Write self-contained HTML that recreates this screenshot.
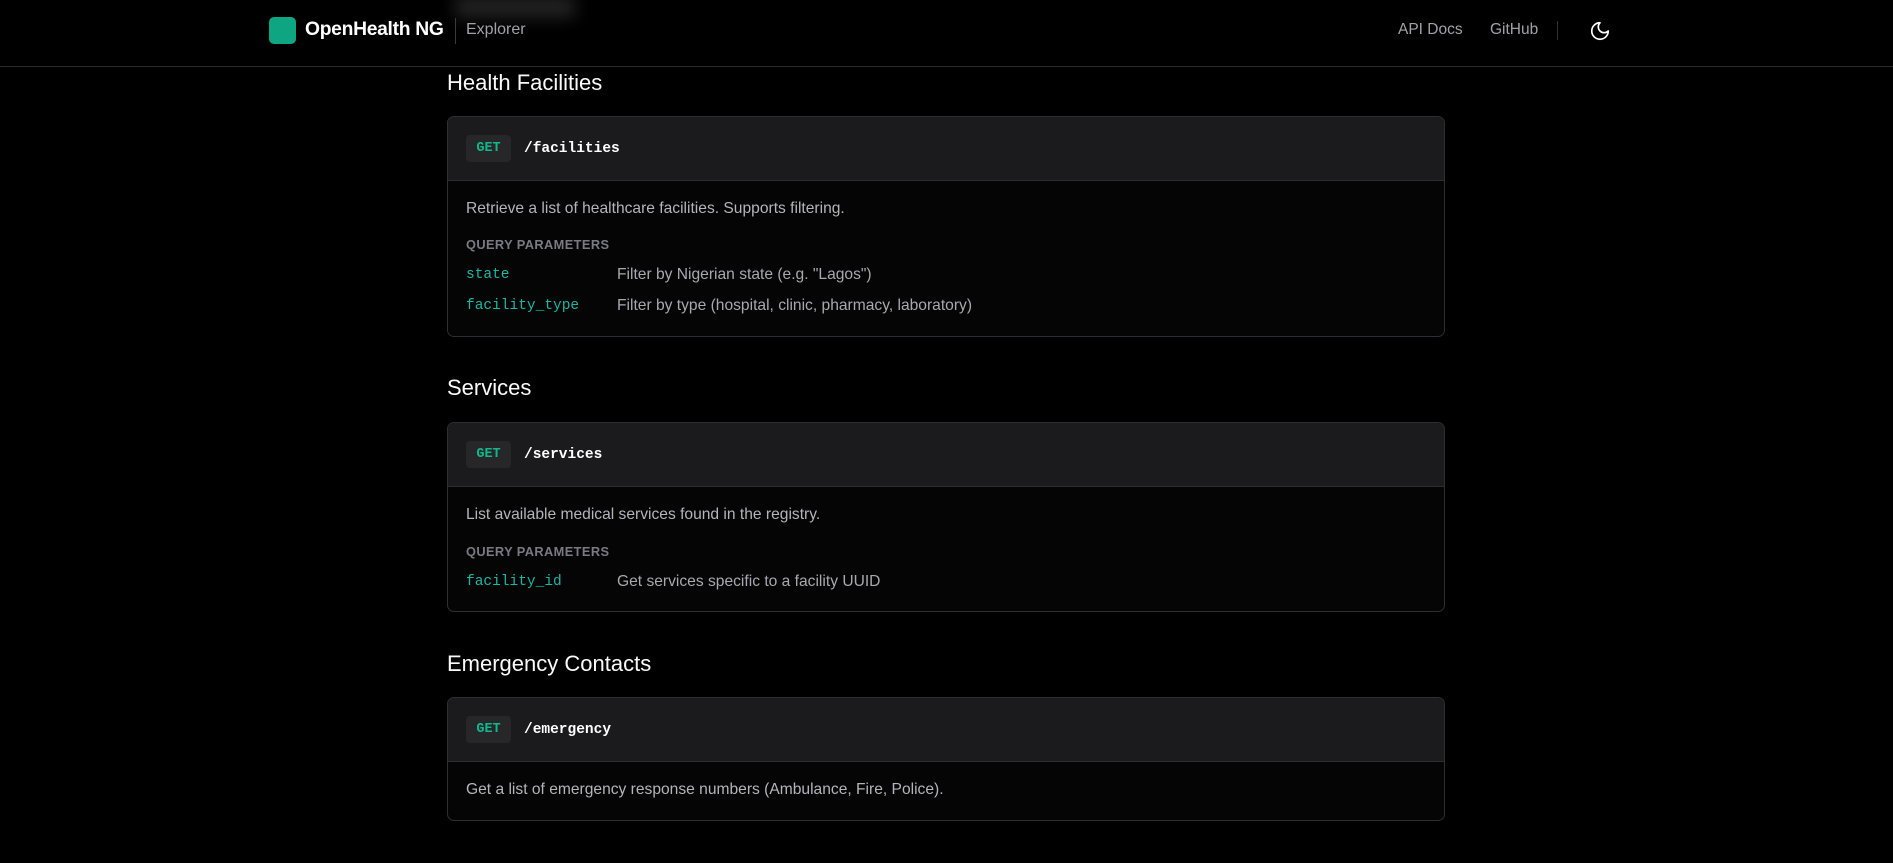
<!DOCTYPE html>
<html><head><meta charset="utf-8"><style>
*{box-sizing:border-box;margin:0;padding:0}
html,body{width:1893px;height:863px;background:#000;overflow:hidden;font-family:"Liberation Sans",Arial,sans-serif;color:#f4f4f5}
.hdr{position:absolute;left:0;top:0;width:1893px;height:67px;border-bottom:1px solid #2a2a2d;background:#000}
.logo{position:absolute;left:269px;top:17px;width:27px;height:27px;border-radius:5px;background:#0ea583}
.brand{position:absolute;left:305px;top:19px;font-size:19.3px;font-weight:bold;color:#fff;letter-spacing:-0.3px}
.vdiv{position:absolute;width:1px;background:#3a3a3d}
.expl{position:absolute;left:466px;top:21px;font-size:16px;color:#a1a1aa}
.nav{position:absolute;top:21px;font-size:15.5px;color:#a1a1aa}
.blur{position:absolute;left:455px;top:-4px;width:120px;height:22px;background:#3a3a3a;filter:blur(8px);opacity:.6}
h2{position:absolute;left:447px;font-size:22px;font-weight:normal;color:#fafafa}
.card{position:absolute;left:447px;width:998px;border:1px solid #2e2e32;border-radius:7px;overflow:hidden;background:#050505}
.ch{height:64px;background:#1b1b1e;border-bottom:1px solid #2e2e32;position:relative}
.get{position:absolute;left:18px;top:18px;width:45px;height:27px;border-radius:4px;background:#27272a;color:#10b98d;font:bold 13.5px "Liberation Mono",monospace;text-align:center;line-height:27px}
.path{position:absolute;left:76px;top:24px;font:bold 14.5px "Liberation Mono",monospace;color:#fff}
.cb{position:relative;padding:0 18px}
.desc{position:absolute;left:18px;font-size:15.6px;color:#b4b4bb}
.qp{position:absolute;left:18px;font-size:12.8px;color:#7a7a82;letter-spacing:.4px;font-weight:bold}
.pn{position:absolute;left:18px;font:14.5px "Liberation Mono",monospace;color:#14b8a6}
.pd{position:absolute;left:169px;font-size:15.6px;color:#a8a8b0}
</style></head><body>
<div class="hdr">
<div class="blur"></div>
<div class="logo"></div>
<div class="brand">OpenHealth NG</div>
<div class="vdiv" style="left:455px;top:18px;height:26px"></div>
<div class="expl">Explorer</div>
<div class="nav" style="left:1398px">API Docs</div>
<div class="nav" style="left:1490px">GitHub</div>
<div class="vdiv" style="left:1557px;top:21px;height:19px;background:#333"></div>
<svg style="position:absolute;left:1589px;top:20px" width="22" height="22" viewBox="0 0 24 24" fill="none" stroke="#fff" stroke-width="1.8" stroke-linecap="round" stroke-linejoin="round"><path d="M12 3a6 6 0 0 0 9 9 9 9 0 1 1-9-9z"/></svg>
</div>

<h2 style="top:70px">Health Facilities</h2>
<div class="card" style="top:116px;height:221px">
<div class="ch"><div class="get">GET</div><div class="path">/facilities</div></div>
<div class="cb">
<div class="desc" style="top:19px">Retrieve a list of healthcare facilities. Supports filtering.</div>
<div class="qp" style="top:56px">QUERY PARAMETERS</div>
<div class="pn" style="top:86px">state</div><div class="pd" style="top:85px">Filter by Nigerian state (e.g. "Lagos")</div>
<div class="pn" style="top:117px">facility_type</div><div class="pd" style="top:116px">Filter by type (hospital, clinic, pharmacy, laboratory)</div>
</div></div>

<h2 style="top:375px">Services</h2>
<div class="card" style="top:422px;height:190px">
<div class="ch"><div class="get">GET</div><div class="path">/services</div></div>
<div class="cb">
<div class="desc" style="top:19px">List available medical services found in the registry.</div>
<div class="qp" style="top:57px">QUERY PARAMETERS</div>
<div class="pn" style="top:87px">facility_id</div><div class="pd" style="top:86px">Get services specific to a facility UUID</div>
</div></div>

<h2 style="top:651px">Emergency Contacts</h2>
<div class="card" style="top:697px;height:124px">
<div class="ch"><div class="get">GET</div><div class="path">/emergency</div></div>
<div class="cb">
<div class="desc" style="top:19px">Get a list of emergency response numbers (Ambulance, Fire, Police).</div>
</div></div>
</body></html>
